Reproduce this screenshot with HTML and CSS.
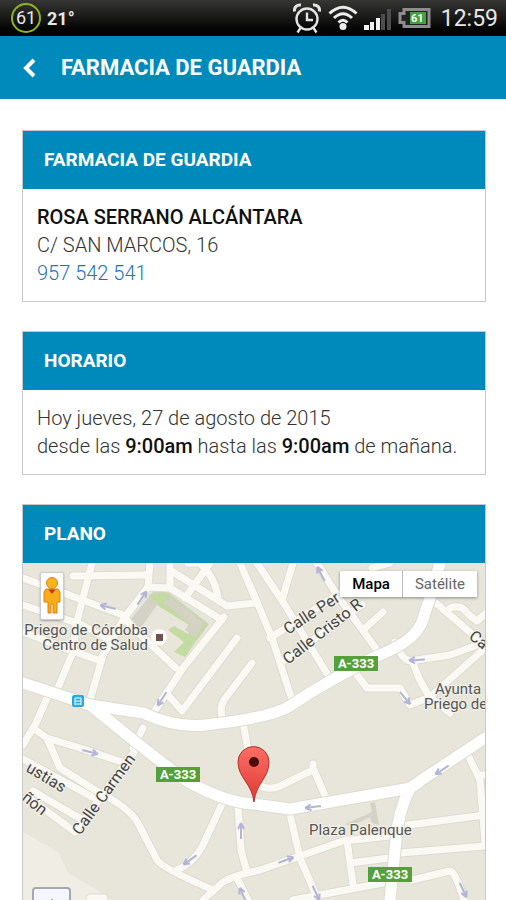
FILE: index.html
```html
<!DOCTYPE html>
<html lang="es">
<head>
    <meta charset="UTF-8">
    <meta name="viewport" content="width=device-width, initial-scale=1.0">
    <title>Farmacia de guardia</title>
    <link rel="stylesheet" href="styles.css">
</head>
<body>
    <div class="status-bar">
        <span class="level">61</span>
        <span class="temp">21°</span>
        <div class="status-icons">
            <svg width="30" height="32" viewBox="0 0 30 32" fill="none" stroke="#e4e4e4" stroke-width="2.4" aria-hidden="true">
                <circle cx="15" cy="17" r="10.5"/>
                <path d="M15 10.500V18h6M8.500 26l-3 4.500M21.500 26l3 4.500" />
                <path d="M2.500 9.500C2 5 5 2.500 9 3M27.500 9.500C28 5 25 2.500 21 3" stroke-width="3"/>
            </svg>
            <svg width="30" height="26" viewBox="0 0 30 26" fill="none" stroke="#ededed" stroke-width="3" aria-hidden="true">
                <path d="M1.500 8.500Q15-4 28.500 8.500M6 13Q15 4.500 24 13M10.500 17.500Q15 13 19.500 17.500"/>
                <circle cx="15" cy="21.500" r="3.500" fill="#ededed" stroke="none"/>
            </svg>
            <svg width="28" height="26" viewBox="0 -4 28 26" aria-hidden="true">
                <path fill="#f2f2f2" d="M0 16h5v5H0zM6 13h4v8H6zM12 9h4v12h-4z"/>
                <path fill="#4c4c4c" d="M17 5h4v16h-4zM23 0h4v21h-4z"/>
            </svg>
            <svg class="battery" width="33" height="20" viewBox="0 0 33 20" aria-hidden="true">
                <path d="M6 1.500h25v17H6v-4H2v-9h4z" fill="#222" stroke="#8d8d8d" stroke-width="3"/>
                <path d="M12 4h16v12H12z" fill="#43a23c"/>
                <text x="13" y="14">61</text>
            </svg>
        </div>
        <span class="clock">12:59</span>
    </div>

    <header class="top-bar">
        <button type="button" class="back" aria-label="Volver">
            <svg width="14" height="20" viewBox="0 0 14 20" fill="none" stroke="#fff" stroke-width="4">
                <path d="M12 2L4 10l8 8"/>
            </svg>
        </button>
        <h1>FARMACIA DE GUARDIA</h1>
    </header>

    <main class="content">
        <section class="card">
            <h2>FARMACIA DE GUARDIA</h2>
            <div class="card-body">
                <strong>ROSA SERRANO ALCÁNTARA</strong><br>
                C/ SAN MARCOS, 16<br>
                <a href="tel:957542541">957 542 541</a>
            </div>
        </section>

        <section class="card">
            <h2>HORARIO</h2>
            <div class="card-body">
                Hoy jueves, 27 de agosto de 2015<br>
                desde las <b>9:00am</b> hasta las <b>9:00am</b> de mañana.
            </div>
        </section>

        <section class="card card-map">
            <h2>PLANO</h2>
            <div class="map">
                <svg class="map-canvas" viewBox="23 563 462 337" role="img" aria-label="Plano">
                    <defs>
                        <g id="streets">
                            <path d="M23 578L123 615L133 628L176 668M23 605L80 624L115 643M23 632L73 651L98 660M92 563L76 625L73 652L57 690M47 698L33 730M73 576L147 575"/>
                            <path d="M150 563L148 587L125 617L103 655L90 700M148 587L170 588L222 620M170 563V588M170 570L227 606L257 603M188 563H200Q217 580 218 600M210 563L185 598M224 617L183 668L150 718"/>
                            <path d="M237 638L182 711L168 695M252 663L224 700Q219 708 223 720M240 563L257 603M250 585L272 638L293 703M257 563L283 602L331 680M293 563L282 600M270 638L345 590M282 662L362 605"/>
                            <path d="M317 563L337 595L377 650M383 612L363 630M430 598L485 645M450 608Q462 604 468 614L477 621L485 614M483 643L450 655L410 661Q402 660 395 642M357 675L367 688H400L410 705L430 697Q418 680 413 662M485 648L430 697L450 713M372 568L390 563"/>
                            <path d="M23 745L33 728L47 738L80 748L122 762M47 738L60 768L95 790Q130 808 138 823L157 860Q162 868 213 890M137 748L75 832M33 791L86 822M28 797L75 832M23 759L92 797M133 748L143 728"/>
                            <path d="M223 802L202 847Q192 864 177 870M238 806L241 850L247 872M203 900L223 882Q235 875 260 870L343 841L390 836M237 878L248 900M243 722L248 750M90 898H104"/>
                            <path d="M258 785Q269 791 280 786L313 770V764M313 768L327 800M289 810L300 858L318 900M347 840L353 885M350 863L389 858M293 900L383 883M412 880L450 871Q455 871 464 900M400 853L485 846M408 825L485 815M468 755L480 780L485 842M480 775H485"/>
                        </g>
                        <g id="roads">
                            <path d="M23 683L90 705L137 743L182 778Q222 802 253 804L290 809L405 789Q412 788 420 781L485 738"/>
                            <path d="M90 705L143 713Q175 728 205 725Q270 718 290 706Q320 685 377 656Q414 642 422 622L430 598L440 563"/>
                            <path d="M410 788Q398 812 396 840L390 900"/>
                        </g>
                        <path id="arrow" d="M-8 0H8M-8 0L-2-3M-8 0L-2 3"/>
                    </defs>
                    <path class="land" d="M23 563h462v337H23z"/>
                    <path class="land-light" d="M23 832L58 852L68 873L94 888L112 900H23z"/>
                    <path class="block" d="M131 619L153 592L168 592L209 624L198 639L185 630L189 624L157 605L139 630z"/>
                    <path class="park" d="M148 595L165 592L208 624L185 657L174 652L184 642L168 630L174 626L188 634L194 628L160 607z"/>
                    <path class="block" d="M163 602L172 598L204 623L195 638L188 632L193 626zM345 824L372 812L370 803L375 802L379 825L372 823L370 817L352 826z"/>
                    <use href="#streets" class="casing"/>
                    <use href="#streets" class="street"/>
                    <use href="#roads" class="road-casing"/>
                    <use href="#roads" class="road"/>
                    <g class="arrows">
                        <use href="#arrow" transform="translate(108 607) rotate(15)"/>
                        <use href="#arrow" transform="translate(142 598) rotate(125)"/>
                        <use href="#arrow" transform="translate(162 699) rotate(-57)"/>
                        <use href="#arrow" transform="translate(321 574) rotate(62)"/>
                        <use href="#arrow" transform="translate(417 660) rotate(-3)"/>
                        <use href="#arrow" transform="translate(405 698) rotate(230)"/>
                        <use href="#arrow" transform="translate(90 752) rotate(195)"/>
                        <use href="#arrow" transform="translate(190 860) rotate(-35)"/>
                        <use href="#arrow" transform="translate(241 831) rotate(90)"/>
                        <use href="#arrow" transform="translate(243 895) rotate(65)"/>
                        <use href="#arrow" transform="translate(313 807) rotate(-8)"/>
                        <use href="#arrow" transform="translate(286 860) rotate(160)"/>
                        <use href="#arrow" transform="translate(316 893) rotate(245)"/>
                        <use href="#arrow" transform="translate(442 770) rotate(-33)"/>
                        <use href="#arrow" transform="translate(463 890) rotate(245)"/>
                    </g>
                    <circle cx="159" cy="637" r="8" fill="#fbfaf6"/>
                    <path d="M156 634h7v7h-7z" fill="#70504f"/>
                    <g class="labels">
                        <text x="148" y="635" text-anchor="end">Priego de Córdoba</text>
                        <text x="148" y="650" text-anchor="end">Centro de Salud</text>
                        <text x="435" y="694">Ayunta</text>
                        <text x="424" y="709">Priego de</text>
                        <text x="309" y="835">Plaza Palenque</text>
                    </g>
                    <g class="labels street-labels">
                        <text transform="translate(288 635) rotate(-33)">Calle Per</text>
                        <text transform="translate(288 665) rotate(-38)">Calle Cristo R</text>
                        <text transform="translate(468 638) rotate(38)">Ca</text>
                        <text transform="translate(80 836) rotate(-54)">Calle Carmen</text>
                        <text transform="translate(62 793) rotate(31)" text-anchor="end">ustias</text>
                        <text transform="translate(42 816) rotate(38)" text-anchor="end">ñón</text>
                    </g>
                    <g class="shields">
                        <path d="M334 656h44v15h-44zM156 767h44v15h-44zM368 867h44v15h-44z"/>
                        <text x="356" y="668">A-333</text>
                        <text x="178" y="779">A-333</text>
                        <text x="390" y="879">A-333</text>
                    </g>
                    <rect x="72" y="695" width="12" height="12" rx="2" fill="#29a9e1"/>
                    <path d="M75 705v-7h6v7M75 701h6M75 704h6" fill="none" stroke="#fff"/>
                    <path d="M254 802C252 783 238 778 238 762A15.500 15.500 0 0 1 269 762C269 778 256 783 254 802z" fill="url(#pin)" stroke="#b3302b"/>
                    <circle cx="254" cy="762" r="5" fill="#4b0b0b"/>
                    <linearGradient id="pin" x1="0" y1="0" x2="0" y2="1">
                        <stop offset="0" stop-color="#fb6e65"/>
                        <stop offset="1" stop-color="#e03a34"/>
                    </linearGradient>
                </svg>
                <button type="button" class="pegman" aria-label="Street View">
                    <svg width="18" height="38" viewBox="0 0 18 38" stroke="#d98212">
                        <path d="M3 12h12l2 3v10h-3v11h-4V27H8v9H5V25H1V15z" fill="#f8ac18"/>
                        <circle cx="9" cy="6" r="5.500" fill="#fbb51c"/>
                        <path d="M5.500 12.500h7L9 17z" fill="#c4331b" stroke="none"/>
                    </svg>
                </button>
                <div class="map-types">
                    <button type="button" class="active">Mapa</button>
                    <button type="button">Satélite</button>
                </div>
                <button type="button" class="map-up" aria-label="Subir">
                    <svg width="10" height="6" viewBox="0 0 10 6"><path d="M5 0l5 6H0z" fill="#263f8c"/></svg>
                </button>
            </div>
        </section>
    </main>
</body>
</html>
```
FILE: styles.css
```css
* {
    box-sizing: border-box;
}

body {
    margin: 0;
    background-color: #fff;
    font-family: Roboto, "Liberation Sans", sans-serif;
    color: #333;
}

h1,
h2 {
    margin: 0;
    font-weight: 700;
    color: #fff;
}

button {
    padding: 0;
    font-family: inherit;
    cursor: pointer;
}

.status-bar {
    display: flex;
    align-items: center;
    height: 36px;
    padding: 0 8px 0 11px;
    background: linear-gradient(#363634, #050505 80%);
    color: #e6e6e6;
}

.level {
    width: 30px;
    height: 30px;
    border: 2px solid #8fb51c;
    border-radius: 50%;
    font-size: 18px;
    line-height: 26px;
    text-align: center;
}

.temp {
    margin-left: 6px;
    font-size: 18px;
    font-weight: 700;
}

.status-icons {
    display: flex;
    align-items: center;
    gap: 6px;
    margin-left: auto;
}

.battery text {
    font-size: 11px;
    font-weight: 700;
    fill: #fff;
}

.clock {
    margin-left: 10px;
    font-size: 23px;
}

.top-bar {
    display: flex;
    align-items: center;
    height: 63px;
    padding: 0 22px;
    background-color: #008abb;
}

.top-bar h1 {
    font-size: 22px;
}

.back {
    display: flex;
    width: 39px;
    border: none;
    background: none;
}

.content {
    display: flex;
    flex-direction: column;
    gap: 29px;
    padding: 31px 20px 0 22px;
}

.card {
    border: 1px solid #c8c8cc;
}

.card h2 {
    padding: 0 21px;
    background-color: #008abb;
    font-size: 19px;
    line-height: 58px;
}

.card-body {
    padding: 14px;
    font-size: 20px;
    font-weight: 300;
    line-height: 28px;
}

.card-body strong,
.card-body b {
    font-weight: 500;
    color: #111;
}

.card-body a {
    color: #2272b9;
    text-decoration: none;
}

.card-map {
    border-bottom: none;
}

.map {
    position: relative;
    overflow: hidden;
}

.map-canvas {
    display: block;
    width: 100%;
}

.land {
    fill: #e8e6db;
}

.land-light {
    fill: #efede4;
}

.block {
    fill: #d3d2c5;
}

.park {
    fill: #c3dba2;
}

.casing,
.street,
.road-casing,
.road {
    fill: none;
    stroke-linecap: round;
    stroke-linejoin: round;
}

.casing {
    stroke: #dedbd0;
    stroke-width: 9px;
}

.street {
    stroke: #faf9f4;
    stroke-width: 7px;
}

.road-casing {
    stroke: #dedbd0;
    stroke-width: 13px;
}

.road {
    stroke: #fff;
    stroke-width: 11px;
}

.arrows {
    fill: none;
    stroke: #b4b5d6;
    stroke-width: 2px;
}

.labels {
    font-size: 15px;
    fill: #555;
    stroke: #f4f2eb;
    stroke-width: 2px;
    paint-order: stroke;
}

.street-labels {
    font-size: 16px;
    fill: #444;
}

.shields {
    fill: #56a039;
}

.shields text {
    font-size: 13px;
    font-weight: 700;
    text-anchor: middle;
    fill: #fff;
}

.pegman {
    position: absolute;
    top: 9px;
    left: 17px;
    display: flex;
    align-items: center;
    justify-content: center;
    width: 24px;
    height: 48px;
    border: 1px solid #ccc;
    border-radius: 2px;
    background-color: #fff;
    box-shadow: 0 1px 2px rgba(0, 0, 0, 0.3);
}

.map-types {
    position: absolute;
    top: 8px;
    right: 8px;
    display: flex;
    background-color: #fff;
    box-shadow: 0 1px 3px rgba(0, 0, 0, 0.4);
}

.map-types button {
    height: 26px;
    padding: 0 12px;
    border: none;
    background: none;
    font-size: 15px;
    color: #666;
}

.map-types .active {
    border-right: 1px solid #bbb;
    font-weight: 500;
    color: #000;
}

.map-up {
    position: absolute;
    bottom: -24px;
    left: 9px;
    display: flex;
    justify-content: center;
    width: 39px;
    height: 37px;
    padding-top: 10px;
    border: 2px solid #a5a8b0;
    border-radius: 4px;
    background-color: #f4f6fb;
}
```
